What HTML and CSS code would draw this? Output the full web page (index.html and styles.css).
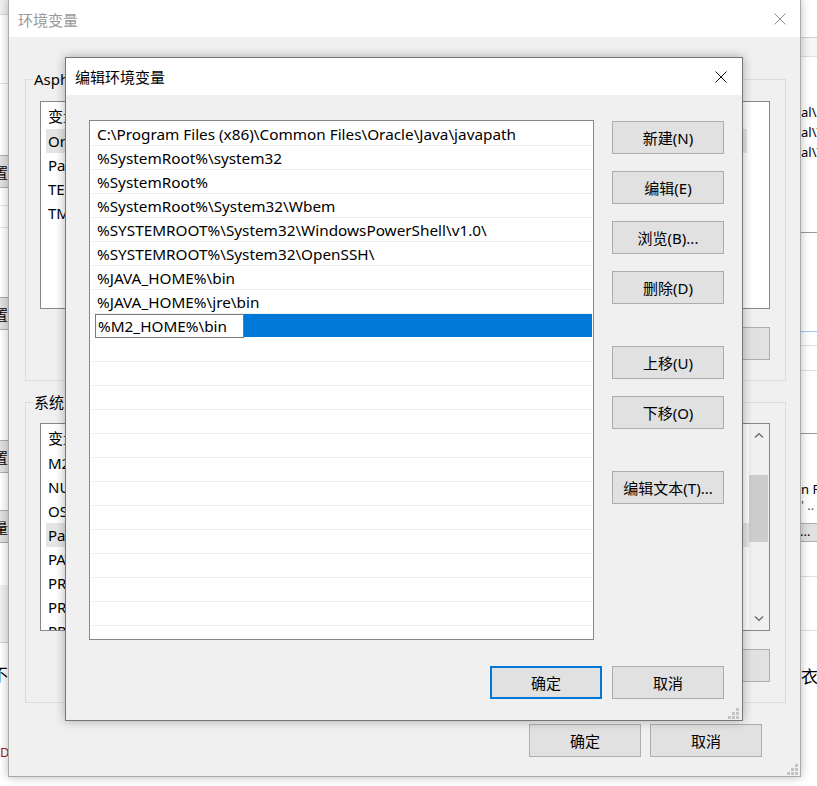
FILE: index.html
```html
<!DOCTYPE html>
<html lang="zh-CN">
<head>
<meta charset="utf-8">
<title>编辑环境变量</title>
<link rel="stylesheet" href="styles.css">
</head>
<body>
<div class="desk">
  <div class="back">
    <div class="strip strip-l">
      <div class="l1"></div>
      <div class="l2"></div>
      <div class="l3"></div>
      <div class="lbtn"><span>设置</span></div>
      <div class="l4"></div>
      <div class="l5"></div>
      <div class="l6"></div>
      <div class="lbtn"><span>设置</span></div>
      <div class="l7"></div>
      <div class="lbtn"><span>设置</span></div>
      <div class="l8"></div>
      <div class="lbtn"><span>变量</span></div>
      <div class="l9"></div>
      <div class="l10"></div>
      <div class="l11"><span class="ltext">不</span></div>
      <div class="l12"><span class="lred">D</span></div>
    </div>
    <div class="back-mid"></div>
    <div class="strip strip-r">
      <div class="r1"></div>
      <div class="r2"></div>
      <div class="r3"></div>
      <div class="rtext">al\Microsoft\WindowsApps</div>
      <div class="rtext">al\Temp</div>
      <div class="rtext">al\Temp</div>
      <div class="r4"></div>
      <div class="r5"></div>
      <div class="r6"></div>
      <div class="r7"></div>
      <div class="r8"></div>
      <div class="r9"></div>
      <div class="rtext">n Files</div>
      <div class="rtext small">' ..</div>
      <div class="r10"></div>
      <div class="rbtn">...</div>
      <div class="r11"></div>
      <div class="r12"></div>
      <div class="r13"></div>
      <div class="rtext cjk">衣</div>
    </div>
  </div>

  <div class="win env">
    <div class="titlebar env-title">
      <span class="title inactive">环境变量</span>
      <svg class="close env-close" width="12" height="12" viewBox="0 0 12 12"><path d="M0.5 0.5 L11.5 11.5 M11.5 0.5 L0.5 11.5" stroke="#8c8c8c" stroke-width="1" fill="none"/></svg>
    </div>
    <div class="env-body">
      <div class="group g1">
        <div class="glabel">Asphalt 的用户变量(U)</div>
        <div class="lv">
          <div class="lv-main">
            <div class="lv-head"><span class="c1">变量</span></div>
            <div class="lv-row hl"><span class="c1">OneDrive</span></div>
            <div class="lv-row"><span class="c1">Path</span></div>
            <div class="lv-row"><span class="c1">TEMP</span></div>
            <div class="lv-row"><span class="c1">TMP</span></div>
          </div>
        </div>
        <div class="btnrow">
          <button class="btn">新建(N)...</button>
          <button class="btn">编辑(E)...</button>
          <button class="btn">删除(D)</button>
        </div>
      </div>

      <div class="group g2">
        <div class="glabel">系统变量(S)</div>
        <div class="lv">
          <div class="lv-main">
            <div class="lv-head"><span class="c1">变量</span></div>
            <div class="lv-row"><span class="c1">M2_HOME</span></div>
            <div class="lv-row"><span class="c1">NUMBER_OF_PROCESSORS</span></div>
            <div class="lv-row"><span class="c1">OS</span></div>
            <div class="lv-row hl2"><span class="c1">Path</span></div>
            <div class="lv-row"><span class="c1">PATHEXT</span></div>
            <div class="lv-row"><span class="c1">PROCESSOR_ARCHITECTURE</span></div>
            <div class="lv-row"><span class="c1">PROCESSOR_IDENTIFIER</span></div>
            <div class="lv-row"><span class="c1">PROCESSOR_LEVEL</span></div>
          </div>
          <div class="sb">
            <div class="sb-btn"><svg width="10" height="6" viewBox="0 0 10 6"><path d="M1 5.5 L5 1.5 L9 5.5" stroke="#606060" stroke-width="1.2" fill="none"/></svg></div>
            <div class="sb-track"><div class="sb-thumb"></div></div>
            <div class="sb-btn"><svg width="10" height="6" viewBox="0 0 10 6"><path d="M1 0.5 L5 4.5 L9 0.5" stroke="#606060" stroke-width="1.2" fill="none"/></svg></div>
          </div>
        </div>
        <div class="btnrow">
          <button class="btn">新建(W)...</button>
          <button class="btn">编辑(I)...</button>
          <button class="btn">删除(L)</button>
        </div>
      </div>

      <div class="env-foot">
        <button class="btn">确定</button>
        <button class="btn">取消</button>
      </div>
    </div>
    <svg class="grip env-grip" width="11" height="11" viewBox="0 0 11 11"><g fill="#c4c4c4"><rect x="8" y="0" width="3" height="3"/><rect x="4" y="4" width="3" height="3"/><rect x="8" y="4" width="3" height="3"/><rect x="0" y="8" width="3" height="3"/><rect x="4" y="8" width="3" height="3"/><rect x="8" y="8" width="3" height="3"/></g></svg>
  </div>

  <div class="win dlg">
    <div class="titlebar dlg-title">
      <span class="title">编辑环境变量</span>
      <svg class="close dlg-close" width="12" height="12" viewBox="0 0 12 12"><path d="M0.5 0.5 L11.5 11.5 M11.5 0.5 L0.5 11.5" stroke="#111" stroke-width="1" fill="none"/></svg>
    </div>
    <div class="dlg-body">
      <div class="plist">
        <div class="prow">C:\Program Files (x86)\Common Files\Oracle\Java\javapath</div>
        <div class="prow">%SystemRoot%\system32</div>
        <div class="prow">%SystemRoot%</div>
        <div class="prow">%SystemRoot%\System32\Wbem</div>
        <div class="prow">%SYSTEMROOT%\System32\WindowsPowerShell\v1.0\</div>
        <div class="prow">%SYSTEMROOT%\System32\OpenSSH\</div>
        <div class="prow">%JAVA_HOME%\bin</div>
        <div class="prow">%JAVA_HOME%\jre\bin</div>
        <div class="prow editing"><span class="edit">%M2_HOME%\bin</span><span class="fill"></span></div>
        <div class="prow"></div>
        <div class="prow"></div>
        <div class="prow"></div>
        <div class="prow"></div>
        <div class="prow"></div>
        <div class="prow"></div>
        <div class="prow"></div>
        <div class="prow"></div>
        <div class="prow"></div>
        <div class="prow"></div>
        <div class="prow"></div>
        <div class="prow"></div>
        <div class="prow"></div>
      </div>
      <div class="side">
        <button class="btn">新建(N)</button>
        <button class="btn gap-s">编辑(E)</button>
        <button class="btn gap-s">浏览(B)...</button>
        <button class="btn gap-s">删除(D)</button>
        <button class="btn gap-l">上移(U)</button>
        <button class="btn gap-s">下移(O)</button>
        <button class="btn gap-l">编辑文本(T)...</button>
      </div>
      <div class="foot">
        <button class="btn default">确定</button>
        <button class="btn">取消</button>
      </div>
    </div>
    <svg class="grip dlg-grip" width="11" height="11" viewBox="0 0 11 11"><g fill="#c4c4c4"><rect x="8" y="0" width="3" height="3"/><rect x="4" y="4" width="3" height="3"/><rect x="8" y="4" width="3" height="3"/><rect x="0" y="8" width="3" height="3"/><rect x="4" y="8" width="3" height="3"/><rect x="8" y="8" width="3" height="3"/></g></svg>
  </div>
</div>
</body>
</html>
```

FILE: styles.css
```css
* { box-sizing: border-box; }
html, body { margin: 0; padding: 0; }
body {
  width: 817px;
  height: 786px;
  overflow: hidden;
  font-family: "Noto Sans", "Noto Sans CJK SC", sans-serif;
  font-size: 15px;
  color: #000;
  background: #fff;
}
.desk { position: relative; width: 817px; height: 786px; overflow: hidden; }

/* far background window */
.back { display: flex; height: 786px; background: #fff; }
.strip { display: flex; flex-direction: column; overflow: hidden; flex: none; }
.strip-l { width: 8px; }
.strip-r { width: 17px; }
.back-mid { flex: 1; }
.l1 { height: 15px; background: #f0f0f0; border-bottom: 1px solid #d9d9d9; }
.l2 { height: 69px; border-bottom: 1px solid #e3e3e3; }
.l3 { height: 71px; }
.lbtn {
  height: 33px; background: #e1e1e1; border-top: 1px solid #adadad; border-bottom: 1px solid #adadad;
  display: flex; justify-content: flex-end; align-items: center; overflow: hidden;
  font-family: "Noto Sans CJK SC", sans-serif; font-size: 14px; white-space: nowrap;
}
.l4 { height: 18px; border-bottom: 1px solid #e5e5e5; }
.l5 { height: 22px; border-bottom: 1px solid #e5e5e5; }
.l6 { height: 69px; }
.l7 { height: 110px; }
.l8 { height: 37px; }
.l9 { height: 42px; }
.l10 { height: 58px; background: #f0f0f0; border-bottom: 1px solid #d0d0d0; }
.l11 { height: 60px; display: flex; align-items: center; justify-content: flex-end; overflow: hidden; }
.ltext { font-family: "Noto Sans CJK SC", sans-serif; font-size: 17px; white-space: nowrap; }
.l12 { flex: 1; display: flex; align-items: flex-start; padding-top: 42px; }
.lred { color: #a0141e; font-size: 13px; line-height: 14px; }

.r1 { height: 38px; border-bottom: 1px solid #d0d0d0; }
.r2 { height: 19px; background: #f5f5f5; border-bottom: 1px solid #e0e0e0; }
.r3 { height: 45px; }
.rtext { height: 20px; line-height: 20px; font-size: 13px; white-space: nowrap; overflow: hidden; padding-left: 1px; flex: none; }
.rtext.small { height: 16px; line-height: 12px; color: #555; }
.rtext.cjk { font-family: "Noto Sans CJK SC", sans-serif; font-size: 17px; height: 24px; line-height: 24px; }
.r4 { height: 71px; border-bottom: 1px solid #999; }
.r5 { height: 99px; border-bottom: 1px solid #99c9ef; }
.r6 { height: 14px; border-bottom: 1px solid #e0e0e0; }
.r7 { height: 25px; border-bottom: 1px solid #e0e0e0; }
.r8 { height: 63px; border-bottom: 1px solid #999; }
.r9 { height: 45px; }
.r10 { height: 8px; }
.rbtn { height: 19px; background: #e1e1e1; border-top: 1px solid #adadad; border-bottom: 1px solid #adadad; font-size: 13px; line-height: 14px; flex: none; }
.r11 { height: 35px; border-bottom: 1px solid #e0e0e0; }
.r12 { height: 54px; border-bottom: 1px solid #e0e0e0; }
.r13 { height: 33px; }

/* windows */
.win { position: absolute; background: #f0f0f0; border: 1px solid #9a9a9a; }
.titlebar { display: flex; align-items: center; justify-content: space-between; background: #fff; height: 37px; flex: none; }
.title { font-family: "Noto Sans CJK SC", sans-serif; font-size: 15px; }
.title.inactive { color: #9a9a9a; }
.close { display: block; flex: none; }
.grip { position: absolute; right: 3px; bottom: 3px; }

/* middle window */
.env {
  left: 8px; top: -1px; width: 793px; height: 778px;
  border-color: #aaaaaa;
  box-shadow: 0 0 9px rgba(0, 0, 0, 0.28);
  display: flex; flex-direction: column;
}
.env-title { padding: 1px 14px 0 9px; height: 37px; }
.env-body { padding: 42px 14px 0 16px; display: flex; flex-direction: column; }
.group { position: relative; border: 1px solid #dcdcdc; padding: 21px 15px 20px 14px; }
.g2 { margin-top: 21px; padding-top: 20px; }
.glabel {
  position: absolute; left: 7px; top: -11px; background: #f0f0f0; padding: 0 1px;
  font-family: "Noto Sans", "Noto Sans CJK SC", sans-serif; font-size: 15px; line-height: 20px; white-space: nowrap;
}
.lv { height: 208px; background: #fff; border: 1px solid #828790; display: flex; overflow: hidden; }
.lv-main { flex: 1; overflow: hidden; }
.lv-head { height: 27px; display: flex; align-items: center; padding-left: 7px; border-right: 0; }
.lv-row { height: 24px; display: flex; align-items: center; margin-left: 5px; padding-left: 2px; white-space: nowrap; }
.lv-row.hl { background: #e5e5e5; margin-right: 22px; }
.lv-row.hl2 { background: #e5e5e5; }
.c1 { width: 200px; flex: none; overflow: hidden; }
.lv-head .c1 { font-family: "Noto Sans CJK SC", sans-serif; }
.sb { width: 20px; flex: none; background: #f0f0f0; display: flex; flex-direction: column; }
.sb-btn { height: 22px; display: flex; align-items: center; justify-content: center; flex: none; }
.sb-track { flex: 1; padding-top: 29px; }
.sb-thumb { height: 67px; background: #cdcdcd; margin-right: 1px; }
.btnrow { display: flex; justify-content: flex-end; gap: 10px; margin-top: 18px; }
.btn {
  width: 112px; height: 33px; padding: 0; margin: 0;
  background: #e1e1e1; border: 1px solid #adadad; border-radius: 0;
  font-family: "Noto Sans", "Noto Sans CJK SC", sans-serif; font-size: 15px; color: #000;
  display: flex; align-items: center; justify-content: center; white-space: nowrap;
}
.env-foot { display: flex; justify-content: flex-end; gap: 9px; margin-top: 21px; padding-right: 24px; }
.env-grip { right: 2px; bottom: 1px; }

/* foreground dialog */
.dlg {
  left: 65px; top: 57px; width: 678px; height: 664px;
  border-color: #767676;
  box-shadow: 0 0 10px rgba(0, 0, 0, 0.3);
  display: flex; flex-direction: column;
}
.dlg-title { padding: 0 15px 0 9px; }
.dlg-body {
  flex: 1;
  display: grid;
  grid-template-columns: 505px 112px;
  grid-template-rows: 520px 33px;
  column-gap: 18px;
  row-gap: 26px;
  padding: 25px 18px 21px 23px;
}
.plist { background: #fff; border: 1px solid #828790; padding: 1px; overflow: hidden; }
.prow {
  height: 24px; border-bottom: 1px solid #eeeeee; padding-left: 6px;
  display: flex; align-items: center; white-space: nowrap; font-size: 15.3px;
}
.prow.editing { padding-left: 4px; border-bottom-color: transparent; }
.edit {
  width: 149px; height: 24px; border: 1px solid #7a7a7a; background: #fff;
  padding-left: 2px; display: flex; align-items: center; flex: none; margin-top: 1px;
}
.fill { flex: 1; height: 23px; background: #0078d7; align-self: flex-start; }
.side { display: flex; flex-direction: column; padding-top: 1px; }
.gap-s { margin-top: 17px; }
.gap-l { margin-top: 42px; }
.foot { grid-column: 1 / -1; display: flex; justify-content: flex-end; gap: 10px; }
.btn.default { border: 2px solid #0078d7; }
.dlg-grip { right: 3px; bottom: 1px; }
```
